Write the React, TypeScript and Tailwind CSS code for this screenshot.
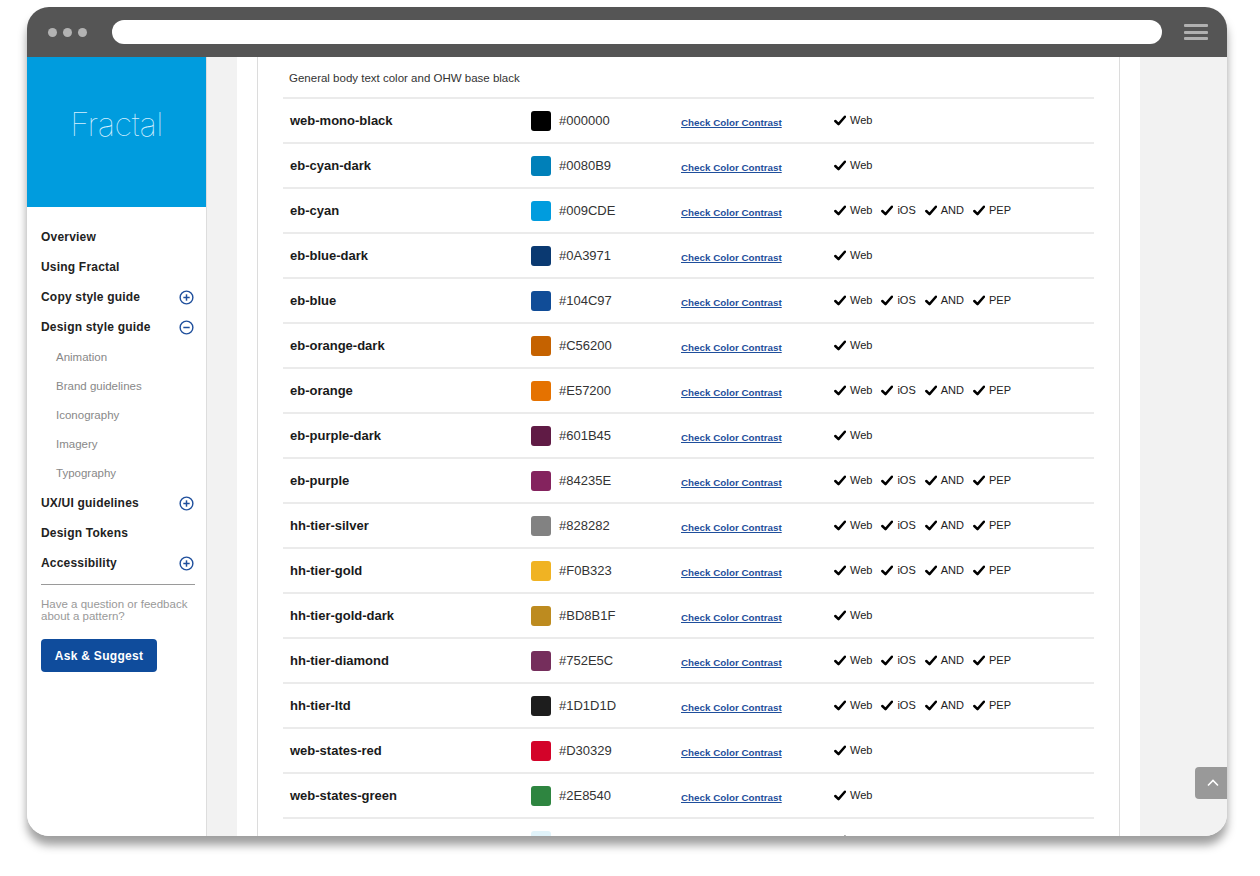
import React from 'react'

type Swatch = {
  name: string;
  hex: string;
  all: boolean;
}

const swatches: Swatch[] = [
  { name: 'web-mono-black', hex: '#000000', all: false },
  { name: 'eb-cyan-dark', hex: '#0080B9', all: false },
  { name: 'eb-cyan', hex: '#009CDE', all: true },
  { name: 'eb-blue-dark', hex: '#0A3971', all: false },
  { name: 'eb-blue', hex: '#104C97', all: true },
  { name: 'eb-orange-dark', hex: '#C56200', all: false },
  { name: 'eb-orange', hex: '#E57200', all: true },
  { name: 'eb-purple-dark', hex: '#601B45', all: false },
  { name: 'eb-purple', hex: '#84235E', all: true },
  { name: 'hh-tier-silver', hex: '#828282', all: true },
  { name: 'hh-tier-gold', hex: '#F0B323', all: true },
  { name: 'hh-tier-gold-dark', hex: '#BD8B1F', all: false },
  { name: 'hh-tier-diamond', hex: '#752E5C', all: true },
  { name: 'hh-tier-ltd', hex: '#1D1D1D', all: true },
  { name: 'web-states-red', hex: '#D30329', all: false },
  { name: 'web-states-green', hex: '#2E8540', all: false },
  { name: 'web-states-blue-light', hex: '#E1F3FA', all: false },
]

function Check() {
  return (
    <svg width="12" height="11" viewBox="0 0 12 11" className="shrink-0">
      <path d="M1.3 6 L4.5 9.1 L10.9 1.7" fill="none" stroke="#000" strokeWidth="2.5" strokeLinecap="round" strokeLinejoin="round" />
    </svg>
  )
}

function Platform({ label }: { label: string }) {
  return (
    <span className="flex items-center gap-[4px]">
      <Check />
      <span>{label}</span>
    </span>
  )
}

function CircleIcon({ minus }: { minus?: boolean }) {
  return (
    <svg width="15" height="15" viewBox="0 0 16 16" className="shrink-0">
      <circle cx="8" cy="8" r="6.8" fill="none" stroke="#1f4f9c" strokeWidth="1.5" />
      <path d="M4.6 8 H11.4" stroke="#1f4f9c" strokeWidth="1.6" />
      {!minus && <path d="M8 4.6 V11.4" stroke="#1f4f9c" strokeWidth="1.6" />}
    </svg>
  )
}

function NavItem({ label, icon }: { label: string; icon?: 'plus' | 'minus' }) {
  return (
    <div className="h-[30px] flex items-center justify-between pr-[12px]">
      <span className="text-[12px] font-bold text-[#222] tracking-[0.2px]">{label}</span>
      {icon && <CircleIcon minus={icon === 'minus'} />}
    </div>
  )
}

function SubItem({ label }: { label: string }) {
  return (
    <div className="h-[29px] flex items-center pl-[15px] text-[11.5px] text-[#888]">{label}</div>
  )
}

function Row({ s }: { s: Swatch }) {
  return (
    <div className="h-[45px] shrink-0 border-b-2 border-[#ebebeb] flex items-center">
      <div className="w-[248px] pl-[7px] text-[13px] font-bold text-[#1a1a1a]">{s.name}</div>
      <div className="w-[150px] flex items-center gap-[8px]">
        <span className="w-[20px] h-[20px] rounded-[3px]" style={{ backgroundColor: s.hex }} />
        <span className="text-[13px] text-[#333]">{s.hex}</span>
      </div>
      <div className="w-[153px] pt-[1px]">
        <a className="text-[9.8px] font-bold text-[#1f4f9c] underline">Check Color Contrast</a>
      </div>
      <div className="flex items-center gap-[9px] text-[11px] text-[#222]">
        <Platform label="Web" />
        {s.all && <Platform label="iOS" />}
        {s.all && <Platform label="AND" />}
        {s.all && <Platform label="PEP" />}
      </div>
    </div>
  )
}

export default function App() {
  return (
    <div className="w-[1260px] h-[876px] bg-white pt-[7px] pl-[27px] font-['Liberation_Sans',Arial,sans-serif] overflow-hidden">
      <div className="relative w-[1200px] h-[829px] rounded-[22px] overflow-hidden flex flex-col shadow-[0_9px_10px_rgba(0,0,0,0.38)]">
        {/* browser chrome */}
        <div className="h-[50px] shrink-0 bg-[#555555] flex items-center">
          <div className="flex items-center gap-[6px] pl-[21px]">
            <span className="w-[9px] h-[9px] rounded-full bg-[#b3b3b3]" />
            <span className="w-[9px] h-[9px] rounded-full bg-[#b3b3b3]" />
            <span className="w-[9px] h-[9px] rounded-full bg-[#b3b3b3]" />
          </div>
          <div className="ml-[25px] w-[1050px] h-[24px] rounded-full bg-white" />
          <div className="ml-[22px] flex flex-col gap-[3.5px]">
            <span className="w-[24px] h-[3px] rounded-[1px] bg-[#b0b0b0]" />
            <span className="w-[24px] h-[3px] rounded-[1px] bg-[#b0b0b0]" />
            <span className="w-[24px] h-[3px] rounded-[1px] bg-[#b0b0b0]" />
          </div>
        </div>

        <div className="flex flex-1 min-h-0">
          {/* sidebar */}
          <div className="w-[180px] shrink-0 bg-white border-r border-[#dddddd] flex flex-col">
            <div className="h-[150px] bg-[#009CDE] flex items-center justify-center pb-[14px]">
              <span className="font-['Inter',sans-serif] font-thin text-[33px] text-[#d4efff] tracking-[-0.5px]">Fractal</span>
            </div>
            <div className="pl-[14px] pt-[15px] flex flex-col">
              <NavItem label="Overview" />
              <NavItem label="Using Fractal" />
              <NavItem label="Copy style guide" icon="plus" />
              <NavItem label="Design style guide" icon="minus" />
              <div className="pt-[1px]" />
              <SubItem label="Animation" />
              <SubItem label="Brand guidelines" />
              <SubItem label="Iconography" />
              <SubItem label="Imagery" />
              <SubItem label="Typography" />
              <NavItem label="UX/UI guidelines" icon="plus" />
              <NavItem label="Design Tokens" />
              <NavItem label="Accessibility" icon="plus" />
              <div className="mt-[6px] mr-[11px] border-t-[1.5px] border-[#9a9a9a]" />
              <p className="mt-[13px] text-[11.5px] leading-[12px] text-[#999]">Have a question or feedback<br />about a pattern?</p>
              <button className="mt-[17px] w-[116px] h-[33px] rounded-[4px] bg-[#0f4c9c] text-white text-[12px] font-bold tracking-[0.3px]">Ask &amp; Suggest</button>
            </div>
          </div>

          {/* gutter */}
          <div className="w-[30px] shrink-0 bg-[#f2f2f2]" />

          {/* main panel */}
          <div className="w-[903px] shrink-0 bg-white px-[20px] flex">
            <div className="flex-1 border-x border-[#dcdcdc] px-[25px] flex flex-col overflow-hidden">
              <div className="h-[42px] shrink-0 border-b-2 border-[#ebebeb] pl-[6px] pt-[13px] text-[11.5px] text-[#333]">
                General body text color and OHW base black
              </div>
              {swatches.map((s) => (
                <Row key={s.name} s={s} />
              ))}
            </div>
          </div>

          {/* right gray */}
          <div className="flex-1 bg-[#f2f2f2]" />
        </div>

        {/* back to top */}
        <div className="absolute left-[1168px] top-[760px] w-[40px] h-[32px] rounded-[4px] bg-[#999999] flex items-center pl-[11px]">
          <svg width="14" height="10" viewBox="0 0 14 10">
            <path d="M2 7.5 L7 2.5 L12 7.5" fill="none" stroke="#fff" strokeWidth="1.6" />
          </svg>
        </div>
      </div>
    </div>
  )
}
